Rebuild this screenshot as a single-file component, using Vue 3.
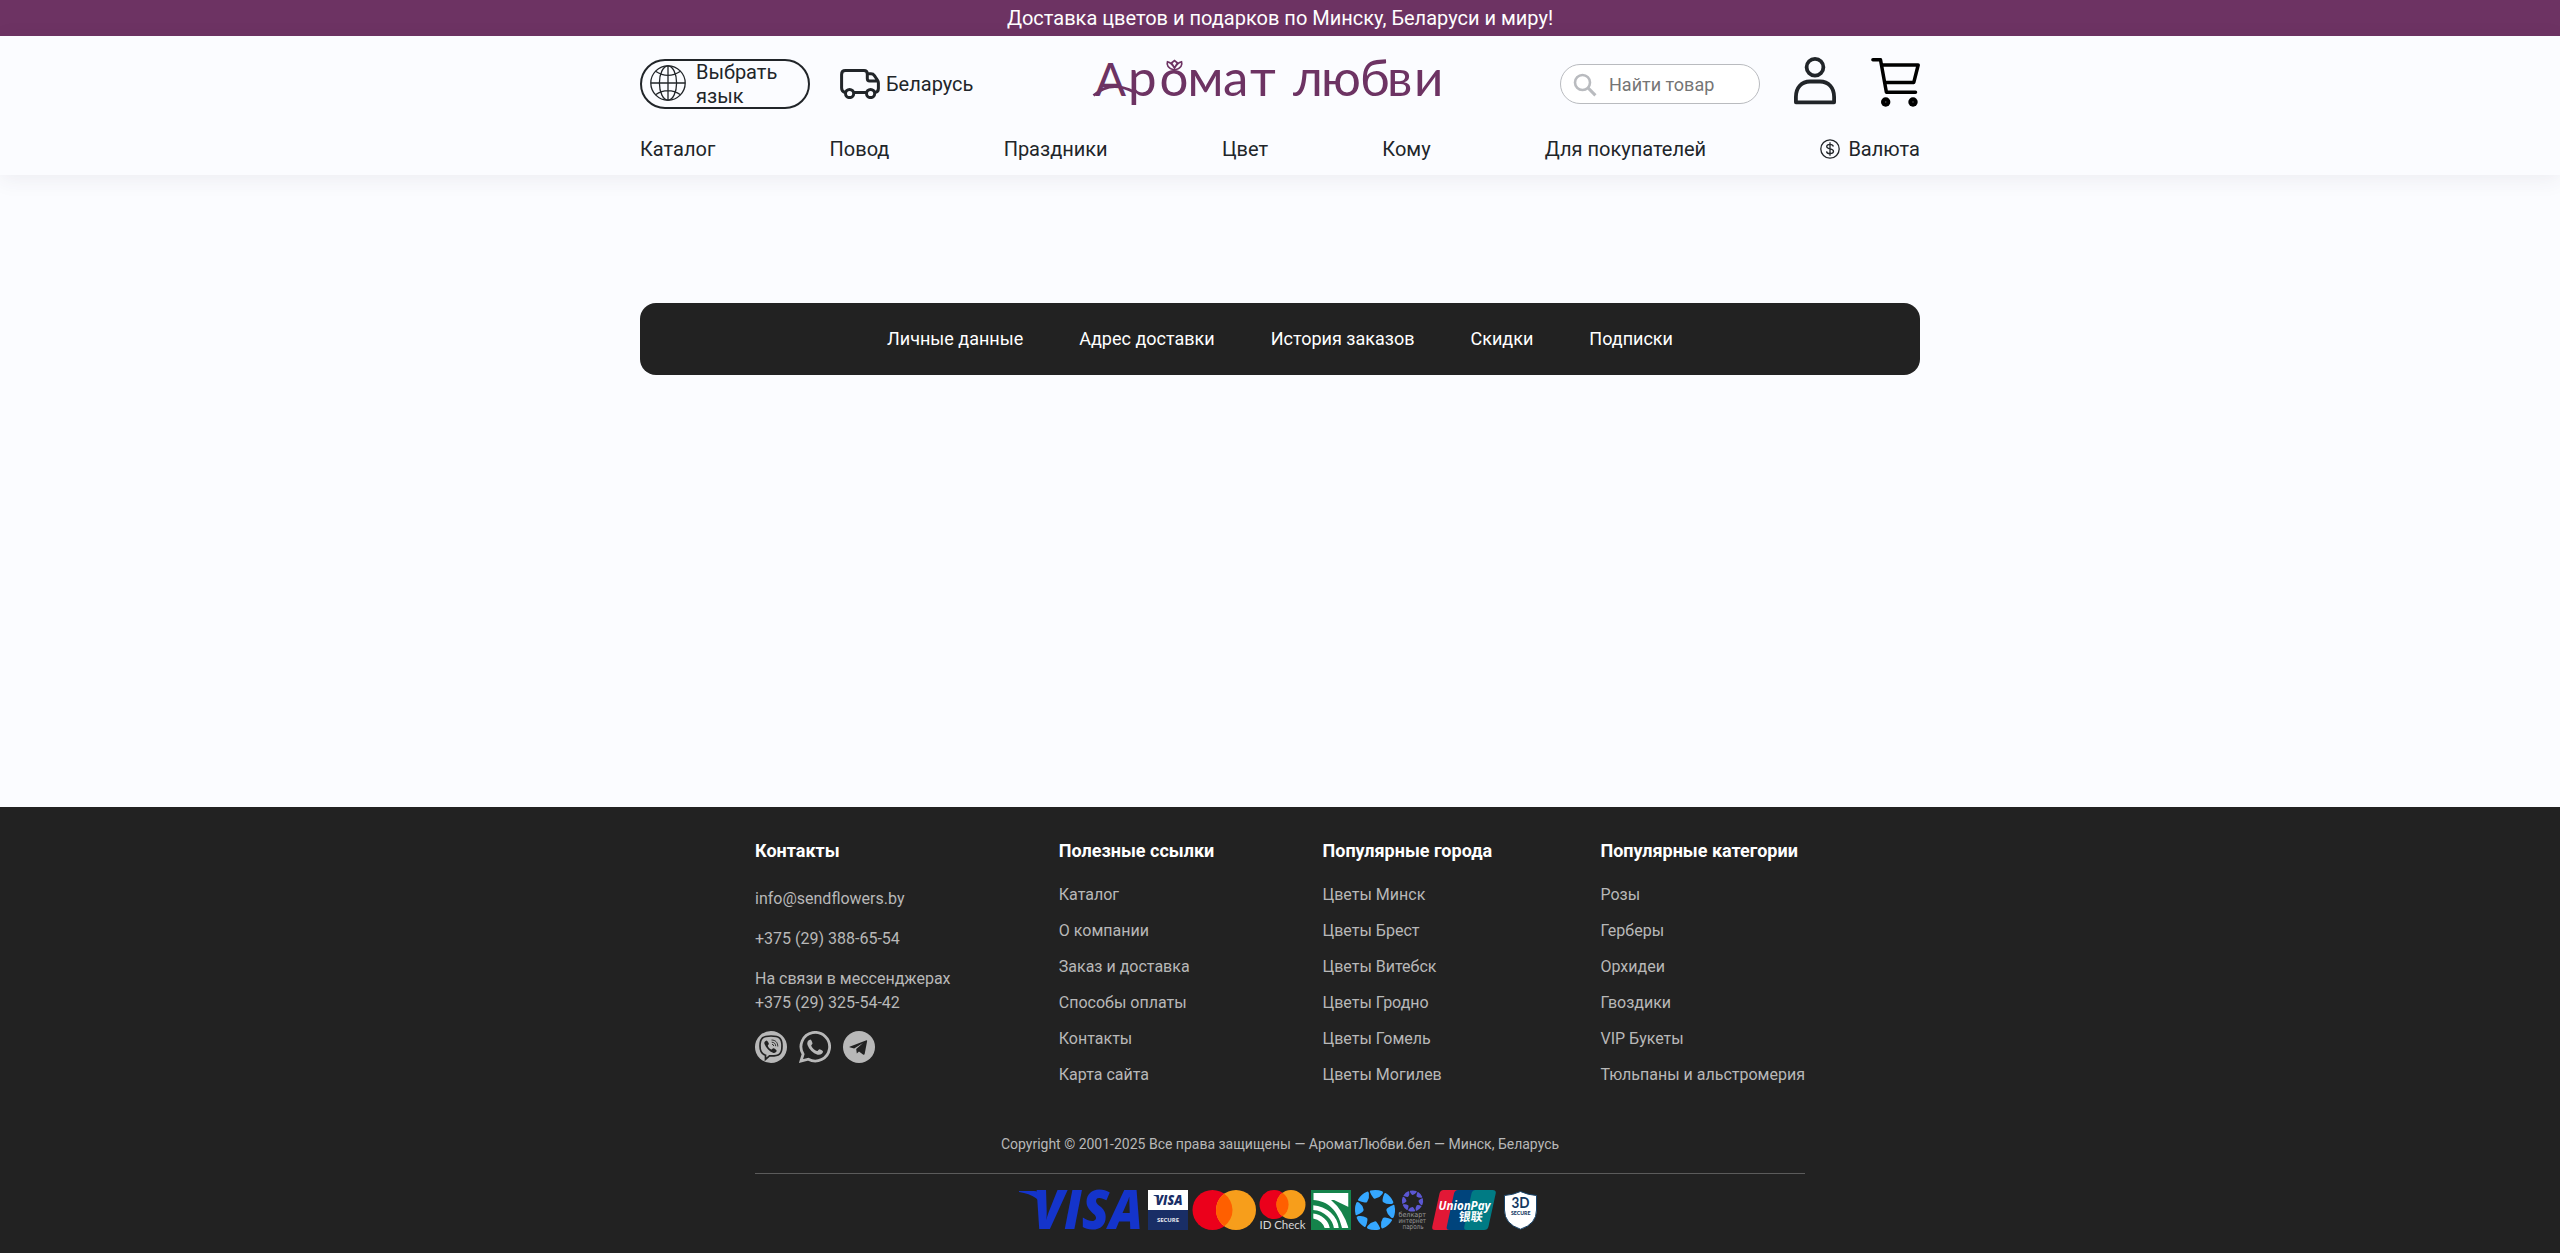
<script setup>
const menu = ['Каталог', 'Повод', 'Праздники', 'Цвет', 'Кому', 'Для покупателей']
const account = ['Личные данные', 'Адрес доставки', 'История заказов', 'Скидки', 'Подписки']
const columns = [
  { title: 'Полезные ссылки', links: ['Каталог', 'О компании', 'Заказ и доставка', 'Способы оплаты', 'Контакты', 'Карта сайта'] },
  { title: 'Популярные города', links: ['Цветы Минск', 'Цветы Брест', 'Цветы Витебск', 'Цветы Гродно', 'Цветы Гомель', 'Цветы Могилев'] },
  { title: 'Популярные категории', links: ['Розы', 'Герберы', 'Орхидеи', 'Гвоздики', 'VIP Букеты', 'Тюльпаны и альстромерия'] },
]
const petals = [0, 45, 90, 135, 180, 225, 270, 315]
const petal = 'M-6.200-19Q0-21 5.600-19.200Q7.200-18.600 6-16.600Q3.600-12.600-.6-11.400Q-2-11-3-12.400Q-5.400-15-6.600-17.600Q-7-18.600-6.200-19Z'
</script>

<template>
  <div class="page">
    <div class="promo">Доставка цветов и подарков по Минску, Беларуси и миру!</div>

    <header class="header">
      <div class="wrap">
        <div class="top">
          <div class="left">
            <button class="lang">
              <svg width="36" height="36" viewBox="0 0 36 36" fill="none" stroke="#212529" stroke-width="1.3">
                <circle cx="18" cy="18" r="17.2" />
                <ellipse cx="18" cy="18" rx="8.6" ry="17.2" />
                <path d="M18 .8V35.2M.8 18H35.2M5.5 6.3Q18 14.5 30.5 6.3M5.5 29.7Q18 21.5 30.5 29.7" />
              </svg>
              <span>Выбрать язык</span>
            </button>
            <a class="region">
              <svg width="40" height="30" viewBox="0 0 40 30" fill="none" stroke="#212529" stroke-width="3" stroke-linejoin="round">
                <path d="M5 23.5Q1.6 22.5 1.6 19V5.5Q1.6 1.6 5.5 1.6H24Q27.3 1.6 27.3 5V9.5Q27.3 12 29.6 12H38M27.3 4.8H31Q33.2 4.8 34.4 6.6L37.4 11Q38.4 12.4 38.4 14V19.5Q38.4 22.8 35 23.5M14 23.5H26" />
                <circle cx="9.6" cy="24.5" r="4.1" />
                <circle cx="30.6" cy="24.5" r="4.1" />
              </svg>
              <span>Беларусь</span>
            </a>
          </div>

          <svg class="logo" width="352" height="50" viewBox="0 0 352 50">
            <g class="word">
              <text y="37" x="3 36 67.5 95.5 131 158"><tspan font-size="46">А</tspan>ромат</text>
              <text y="37" x="201 229 268 295 322">любви</text>
            </g>
            <g fill="none" stroke="#6d3363" stroke-width="2.6">
              <path d="M1.500 36.500C12 27 26 24.500 42 33" />
              <path d="M82.500 11C75.500 9.500 74.500 5.500 75.500 2.800Q79.500 3.500 82.500 9Q85.500 3.500 89.500 2.800C90.500 5.500 89.500 9.500 82.500 11ZM79.500 4L82.500 1.500L85.500 4L82.500 9Z" stroke-width="1.700" />
            </g>
          </svg>

          <div class="right">
            <label class="search">
              <svg width="40" height="38" viewBox="0 0 40 38" fill="none" stroke="#b9bbbf" stroke-width="2.6">
                <circle cx="21.500" cy="17.500" r="7.500" />
                <path d="M26.800 22.600L34.400 30.400" stroke-width="3" />
              </svg>
              <input placeholder="Найти товар" />
            </label>
            <svg class="person" width="42" height="50" viewBox="0 0 42 50" fill="none" stroke="#212529" stroke-width="3.8" stroke-linejoin="round">
              <circle cx="21" cy="11.200" r="8.400" />
              <path d="M1.900 46.300V41C1.900 31.500 7.500 25.500 16 25.500H26C34.500 25.500 40.100 31.500 40.100 41V46.300Z" />
            </svg>
            <svg class="cart" width="49" height="50" viewBox="0 0 49 50" fill="none" stroke="#000" stroke-width="3.500" stroke-linecap="round" stroke-linejoin="round">
              <path d="M1.900 2.800H9.500L15.400 35.200H44.500M11.400 8H47.200L42.800 25.400H14.500" />
              <g fill="#000" stroke="none">
                <circle cx="14.700" cy="45" r="4.700" />
                <circle cx="42" cy="45" r="4.700" />
              </g>
              <g fill="#555" stroke="none">
                <circle cx="14.700" cy="45" r=".8" />
                <circle cx="42" cy="45" r=".8" />
              </g>
            </svg>
          </div>
        </div>

        <nav class="menu">
          <a v-for="item in menu" :key="item">{{ item }}</a>
          <a class="currency">
            <svg width="20" height="20" viewBox="0 0 20 20" fill="none" stroke="#212529" stroke-width="1.300">
              <circle cx="10" cy="10" r="9.200" />
              <path d="M13.400 7.500C13 5.900 11.800 5.300 10 5.300C8 5.300 6.700 6.200 6.700 7.600C6.700 10.900 13.500 8.900 13.500 12.300C13.500 13.800 12 14.700 10 14.700C8 14.700 6.700 13.900 6.500 12.300M10 3.300V16.700" />
            </svg>
            <span>Валюта</span>
          </a>
        </nav>
      </div>
    </header>

    <main class="main">
      <nav class="account">
        <a v-for="item in account" :key="item">{{ item }}</a>
      </nav>
    </main>

    <footer class="footer">
      <div class="inner">
        <div class="columns">
          <section>
            <h4>Контакты</h4>
            <div class="contacts">
              <p>info@sendflowers.by</p>
              <p>+375 (29) 388-65-54</p>
              <p>На связи в мессенджерах<br />+375 (29) 325-54-42</p>
            </div>
            <div class="social">
              <svg viewBox="0 0 32 32">
                <circle cx="16" cy="16" r="16" fill="#b8b8b8" />
                <path d="M16 5C7.500 5 5 7.500 5 15C5 20.500 6.500 23 10.500 24.200V28.400L14.500 24.900C24.500 25.300 27 23 27 15C27 7.500 24.500 5 16 5Z" fill="none" stroke="#222" stroke-width="1.700" />
                <path d="M11.500 9.500C9.500 10.300 9 11.500 9.500 13C11 17 14 20.300 18.500 22C20 22.300 21.300 21.300 21.700 19.800C21.500 18.800 19.500 17.500 18.500 17.300C17.500 17.200 17.300 18.700 16.300 18.500C14.500 17.800 13.200 16.300 12.800 14.800C12.800 13.900 14 13.700 13.900 12.700C13.500 11.600 12.500 10 11.500 9.500Z" fill="#222" />
                <path d="M16.500 9C20.500 9 22.800 11.500 22.800 15.500M16.700 11.200C19.300 11.300 20.700 12.800 20.700 15.200M17 13.300Q18.700 13.400 18.700 15" fill="none" stroke="#222" stroke-width=".9" />
              </svg>
              <svg viewBox="0 0 32 32">
                <path d="M2 30L4.100 23.200A14.300 14.300 0 1 1 9.300 28.200Z" fill="none" stroke="#b8b8b8" stroke-width="2.800" />
                <path d="M11.300 8.500C8.800 9.200 7.700 11.500 8.500 14C10.200 18.800 13.800 22.200 18.600 23.700C21.500 24.300 24 22.700 24 20.200C23.900 19.600 20.900 18.100 20.300 18.200C19.500 18.400 18.800 20.100 18 20.100C15.500 19.300 13.300 17.200 12.200 14.800C12.200 14.100 13.600 13.300 13.500 12.300C13.200 11 12.400 8.800 11.300 8.500Z" fill="#b8b8b8" />
              </svg>
              <svg viewBox="0 0 32 32">
                <circle cx="16" cy="16" r="16" fill="#b8b8b8" />
                <path d="M6.500 15.800L23.500 9.200Q24.300 9.100 24.100 10.200L21.700 22.800Q21.400 24.300 20 23.500L16 20.500L13.800 22.600L13.200 18.100L20 12L11.200 17.500L6.500 16.300Z" fill="#222" />
              </svg>
            </div>
          </section>
          <section v-for="col in columns" :key="col.title">
            <h4>{{ col.title }}</h4>
            <ul>
              <li v-for="link in col.links" :key="link">{{ link }}</li>
            </ul>
          </section>
        </div>

        <p class="copy">Copyright © 2001-2025 Все права защищены — АроматЛюбви.бел — Минск, Беларусь</p>

        <div class="payments">
          <svg width="529" height="40" viewBox="0 0 529 40">
            <!-- Visa -->
            <g fill="#1434cb">
              <path d="M0 1H15Q20 1 21.500 6L25 20Q21 5 0 2Z" />
              <text x="14" y="39.300" font-size="54" font-weight="800" font-style="italic" textLength="110" lengthAdjust="spacingAndGlyphs" class="sans">VISA</text>
            </g>
            <!-- Visa Secure -->
            <g transform="translate(129 0)">
              <path d="M0 0H35V20H0Z" fill="#fff" transform="scale(1.143 1)" />
              <path d="M0 20H40V40H0Z" fill="#192e66" />
              <text x="7.500" y="15" font-size="14" font-weight="800" font-style="italic" fill="#192e66" textLength="27" lengthAdjust="spacingAndGlyphs" class="sans">VISA</text>
              <path d="M5.500 5H10L11.500 9Q9.500 6 5.500 5.500Z" fill="#192e66" />
              <text x="9" y="31.800" font-size="6" font-weight="700" fill="#e8eaf0" textLength="22" class="sans">SECURE</text>
            </g>
            <!-- Mastercard -->
            <g transform="translate(173.500 0)">
              <circle cx="20" cy="20" r="20" fill="#eb001b" />
              <circle cx="43.500" cy="20" r="20" fill="#f79e1b" />
              <path d="M31.750 3.800A20 20 0 0 1 31.750 36.200A20 20 0 0 1 31.750 3.800Z" fill="#ff5f00" />
            </g>
            <g transform="translate(240.500 0)">
              <circle cx="14.500" cy="14.500" r="14.500" fill="#eb001b" />
              <circle cx="31.500" cy="14.500" r="14.500" fill="#f79e1b" />
              <path d="M23 2.700A14.500 14.500 0 0 1 23 26.300A14.500 14.500 0 0 1 23 2.700Z" fill="#ff5f00" />
              <text x="0" y="38.800" font-size="11.500" fill="#d8d8d8" textLength="46" class="lato">ID Check</text>
            </g>
            <!-- Belarusbank -->
            <svg x="292" width="40" height="40" viewBox="0 0 40 40">
              <path d="M0 0H40V40H0Z" fill="#15834b" />
              <svg x="2.300" y="3" width="35.200" height="35" viewBox="2.300 3 35.200 35">
                <path d="M2.300 3H37.500V10H20Q32 20 37.500 38H31C27 20 17 11 2.300 10Z" fill="#fff" />
                <g fill="none" stroke="#fff">
                  <ellipse cx="0" cy="41" rx="25.500" ry="23.500" stroke-width="4.800" />
                  <ellipse cx="0" cy="41" rx="16.500" ry="15" stroke-width="5" />
                </g>
                <path d="M23 10H37.500V17Z" fill="#fff" />
              </svg>
            </svg>
            <!-- Belkart -->
            <g transform="translate(356 20)" fill="#35a7ff">
              <path v-for="a in petals" :key="a" :d="petal" :transform="`rotate(${a + 5})`" />
            </g>
            <g transform="translate(379 0)">
              <g transform="translate(14.500 11) scale(.53)" fill="#5b57d3">
                <path v-for="a in petals" :key="a" :d="petal" :transform="`rotate(${a + 5})`" />
              </g>
              <g fill="#9b9b9b" font-size="7" class="dv">
                <text x=".5" y="27.300" textLength="27.500" lengthAdjust="spacingAndGlyphs">белкарт</text>
                <text x=".5" y="33" textLength="27.500" lengthAdjust="spacingAndGlyphs">интернет</text>
                <text x="4.500" y="38.600" textLength="21" lengthAdjust="spacingAndGlyphs">пароль</text>
              </g>
            </g>
            <!-- UnionPay -->
            <g transform="translate(413 0)">
              <path d="M11.500 0H30L21 40H3Q-.5 40 .3 36.500L7.500 3.500Q8.300 0 11.500 0Z" fill="#e21836" />
              <path d="M26 0H48L39 40H17.500Q14 40 14.800 36.500L22 3.500Q22.800 0 26 0Z" fill="#00447c" />
              <path d="M43.500 0H60.500Q64.500 0 63.700 3.500L56.500 36.500Q55.700 40 52 40H35Q31.500 40 32.300 36.500L39.500 3.500Q40.300 0 43.500 0Z" fill="#007b84" />
              <text x="6.500" y="20" font-size="12" font-weight="700" font-style="italic" fill="#fff" textLength="52" lengthAdjust="spacingAndGlyphs" class="sans">UnionPay</text>
              <text x="26.500" y="31" font-size="12" font-weight="700" fill="#fff" transform="skewX(-7) translate(3.500 0)" class="cjk">银联</text>
            </g>
            <!-- 3D Secure -->
            <g transform="translate(484 0)">
              <path d="M17.500 1.500Q25 5 33.500 5.500V20Q33.500 34 17.500 39.200Q1.500 34 1.500 20V5.500Q10 5 17.500 1.500Z" fill="#fff" stroke="#174369" />
              <text x="8.500" y="17.500" font-size="14.500" font-weight="700" fill="#12385f" textLength="18" lengthAdjust="spacingAndGlyphs" class="lato">3D</text>
              <text x="8" y="25.300" font-size="5" font-weight="900" fill="#12385f" textLength="19.500" lengthAdjust="spacingAndGlyphs" class="lato">SECURE</text>
            </g>
          </svg>
        </div>
      </div>
    </footer>
  </div>
</template>

<style>
body {
  background: #fbfcff;
}
</style>

<style scoped>
.page {
  display: flex;
  flex-direction: column;
  height: 1253px;
  overflow: hidden;
  background: #fbfcff;
  color: #212529;
  font: 400 20px/24px Roboto, sans-serif;
}
.promo {
  height: 36px;
  line-height: 37px;
  text-align: center;
  color: #fff;
  background: #6d3363;
}
.header {
  height: 139px;
  background: #fbfcff;
  box-shadow: 0 4px 20px rgba(70, 50, 80, 0.08);
}
.wrap {
  width: 1280px;
  margin: 0 auto;
}
.top {
  display: grid;
  grid-template-columns: 452px 352px 1fr;
  align-items: center;
  height: 96px;
}
.left,
.right,
.region,
.currency {
  display: flex;
  align-items: center;
}
.right {
  justify-content: flex-end;
}
.lang {
  box-sizing: border-box;
  display: flex;
  align-items: center;
  gap: 10px;
  width: 170px;
  height: 50px;
  padding: 0 8px;
  border: 2px solid #212529;
  border-radius: 25px;
  background: none;
  color: inherit;
  font: inherit;
  text-align: left;
}
.lang svg {
  flex: none;
  margin-top: -2px;
}
.region {
  gap: 6px;
  margin-left: 30px;
}
.logo {
  overflow: visible;
}
.word {
  font: 400 51px Lato, sans-serif;
  fill: #6d3363;
}
.search {
  box-sizing: border-box;
  display: flex;
  align-items: center;
  width: 200px;
  height: 40px;
  border: 1px solid #b9bbbf;
  border-radius: 20px;
  background: #fff;
  overflow: hidden;
}
.search svg {
  flex: none;
}
.search input {
  width: 140px;
  padding: 0 0 0 8px;
  border: 0;
  background: none;
  outline: 0;
  font: 18px Roboto, sans-serif;
}
.search input::placeholder {
  color: #757575;
}
.person {
  margin: -7px 35px 0 34px;
}
.cart {
  margin-top: -4px;
}
.menu {
  display: flex;
  justify-content: space-between;
  padding-top: 5px;
}
.currency {
  gap: 8px;
}
.main {
  flex: 1;
}
.account {
  display: flex;
  justify-content: center;
  align-items: center;
  gap: 56px;
  width: 1280px;
  height: 72px;
  margin: 128px auto 0;
  border-radius: 16px;
  background: #222;
  color: #fff;
  font-size: 18px;
}
.footer {
  height: 446px;
  background: #222;
  color: #b8b8b8;
  font-size: 16px;
}
.inner {
  width: 1050px;
  margin: 0 auto;
}
.columns {
  display: flex;
  justify-content: space-between;
  height: 322px;
  padding-top: 32px;
  box-sizing: border-box;
}
h4 {
  margin: 0;
  color: #fff;
  font-size: 18px;
  font-weight: 700;
}
ul {
  list-style: none;
  margin: 20px 0 0;
  padding: 0;
}
li {
  height: 24px;
  margin-bottom: 12px;
}
.contacts {
  margin-top: 24px;
}
.contacts p {
  margin: 0 0 16px;
}
.social {
  display: flex;
  gap: 12px;
}
.social svg {
  width: 32px;
  height: 32px;
}
.copy {
  margin: 0;
  padding: 3px 0 17px;
  text-align: center;
  font-size: 14px;
  border-bottom: 1px solid #5c5c5c;
}
.payments {
  display: flex;
  justify-content: center;
  padding-top: 16px;
  margin-left: 7px;
}
.payments svg {
  overflow: visible;
}
.payments svg svg svg {
  overflow: hidden;
}
.sans {
  font-family: 'Open Sans', sans-serif;
}
.lato {
  font-family: Lato, sans-serif;
}
.dv {
  font-family: 'DejaVu Sans', sans-serif;
}
.cjk {
  font-family: 'Noto Sans CJK SC', sans-serif;
}
</style>
